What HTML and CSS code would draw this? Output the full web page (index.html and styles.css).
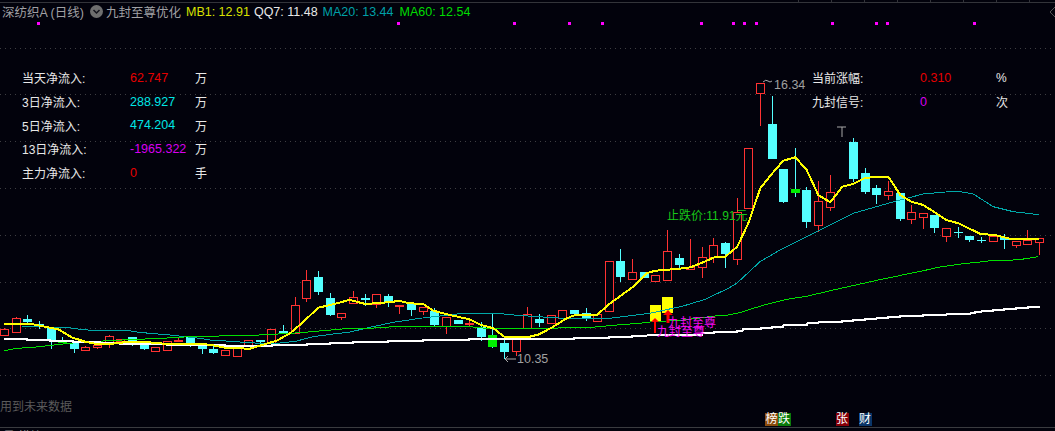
FILE: index.html
```html
<!DOCTYPE html>
<html lang="zh">
<head>
<meta charset="utf-8">
<title>深纺织A (日线)</title>
<link rel="stylesheet" href="styles.css">
</head>
<body>
<div class="screen">
  <svg class="chart" id="chart" width="1055" height="431" viewBox="0 0 1055 431" xmlns="http://www.w3.org/2000/svg">
    <g id="frame"></g>
    <g id="signals"></g>
    <g id="candles"></g>
    <g id="lines"></g>
    <path class="arrow-down" d="M668 310l5 5h-3.500v8h-3v-8h-3.500zM655 318l4 4h-3v11h-2v-11h-3z"/>
    <text class="tag-magenta" x="668" y="327">九封至尊</text>
    <text class="tag-magenta" x="657" y="336">九封至尊</text>
    <text class="tag-green" x="667" y="220">止跌价:11.91元</text>
    <text class="tag-grey" x="774" y="89">16.34</text>
    <text class="tag-grey" x="517" y="363">10.35</text>
    <path class="tag-stroke" d="M763 82q3-3 5-1t4 0M505 359h11M505 359l3-3M505 359l3 3"/>
    <path class="tag-stroke" d="M837 127h9M842 127v10"/>
    <path class="tag-stroke chev" d="M1055 7l-5 5 5 5"/>
    <text class="warn" x="0" y="411">用到未来数据</text>
    <text class="clip-text" x="3" y="441">量 模块</text>
  </svg>

  <header class="head">
    <span class="title">深纺织A (日线)</span>
    <span class="drop"><svg width="13" height="13" viewBox="0 0 13 13"><circle cx="6.500" cy="6.500" r="6.500" fill="#6e6e6e"/><path d="M3.500 5l3 3 3-3" fill="none" stroke="#14141c" stroke-width="1.500"/></svg></span>
    <span class="title">九封至尊优化</span>
    <span class="mb">MB1: 12.91</span>
    <span class="qq">QQ7: 11.48</span>
    <span class="ma20">MA20: 13.44</span>
    <span class="ma60">MA60: 12.54</span>
  </header>

  <main class="panels">
    <section class="stats left">
      <span>当天净流入:</span><span class="red">62.747</span><span>万</span>
      <span>3日净流入:</span><span class="cyan">288.927</span><span>万</span>
      <span>5日净流入:</span><span class="cyan">474.204</span><span>万</span>
      <span>13日净流入:</span><span class="magenta">-1965.322</span><span>万</span>
      <span>主力净流入:</span><span class="red">0</span><span>手</span>
    </section>
    <section class="stats right">
      <span>当前涨幅:</span><span class="red">0.310</span><span>%</span>
      <span>九封信号:</span><span class="magenta">0</span><span>次</span>
    </section>
  </main>

  <footer class="badges">
    <span class="badge brown">榜</span><span class="badge green">跌</span>
    <span class="badge maroon gap-a">张</span>
    <span class="badge navy gap-b">财</span>
  </footer>
</div>
<script src="chart.js"></script>
</body>
</html>
```
FILE: styles.css
```css
* { box-sizing: border-box; }
html, body { margin: 0; padding: 0; background: #02020c; }
.screen {
  position: relative;
  width: 1055px;
  height: 431px;
  overflow: hidden;
  background: #02020c;
  font-family: "Liberation Sans", "Noto Sans CJK SC", sans-serif;
  font-size: 12px;
  color: #e8e8e8;
}
.chart { position: absolute; left: 0; top: 0; }
.chart text { font-family: "Liberation Sans", "Noto Sans CJK SC", sans-serif; }

.head {
  position: relative;
  display: flex;
  align-items: center;
  height: 22px;
  padding: 1px 0 0 2px;
  font-size: 12.500px;
  white-space: nowrap;
}
.title { color: #a0a0a4; }
.drop { display: flex; margin: 0 3px 0 6px; }
.mb { color: #d8e000; margin-left: 5px; }
.qq { color: #e8e8e8; margin-left: 4px; }
.ma20 { color: #00a0a8; margin-left: 5px; }
.ma60 { color: #00dc00; margin-left: 6px; }

.panels {
  position: relative;
  display: flex;
  padding: 44px 0 0 22px;
}
.stats {
  display: grid;
  grid-auto-rows: 23.700px;
  align-items: center;
}
.left { grid-template-columns: 108px 65px 30px; }
.right { grid-template-columns: 108px 76px 30px; margin-left: 587px; }
.red, .cyan, .magenta { font-size: 12.500px; }
.red { color: #e60000; }
.cyan { color: #00e6e6; }
.magenta { color: #d800f0; }

.badges {
  position: absolute;
  left: 765px;
  top: 413px;
  display: flex;
}
.badge {
  width: 13px;
  height: 13px;
  font-size: 12px;
  line-height: 13px;
  text-align: center;
  color: #fff;
}
.brown { background: #8a4a0c; }
.green { background: #0a7a0a; margin-left: -0.500px; }
.maroon { background: #860008; }
.navy { background: #0a3568; }
.gap-a { margin-left: 45px; }
.gap-b { margin-left: 10px; }

.arrow-down { fill: #ff0000; }
.tag-magenta { fill: #f408f0; font-size: 12px; }
.tag-green { fill: #18c818; font-size: 12px; }
.tag-grey { fill: #a0a0a0; font-size: 12.500px; }
.tag-stroke { fill: none; stroke: #a8a8a8; stroke-width: 1; }
.chev { stroke: #555; }
.warn { fill: #5a5a5a; font-size: 12px; }
.clip-text { fill: #999; font-size: 12px; }
```
FILE: chart.js
```javascript
var NS = "http://www.w3.org/2000/svg";

function el(parent, name, attrs) {
  var node = document.createElementNS(NS, name);
  for (var key in attrs) node.setAttribute(key, attrs[key]);
  parent.appendChild(node);
  return node;
}

/* Frame: top rule with ticks, dotted price grid, bottom rule */
var frame = document.getElementById("frame");
el(frame, "rect", { x: 0, y: 2, width: 1055, height: 1, fill: "#33343a" });
[798, 831, 864, 897, 930, 963, 996, 1029].forEach(function (x) {
  el(frame, "rect", { x: x, y: 0, width: 1, height: 3, fill: "#33343a" });
});
[48, 94, 141, 188, 235, 282, 328, 375].forEach(function (y) {
  el(frame, "line", { x1: 0, x2: 1055, y1: y + 0.5, y2: y + 0.5, stroke: "#3e3e42", "stroke-dasharray": "1 4" });
});
el(frame, "rect", { x: 0, y: 427, width: 1055, height: 1, fill: "#3a3b40" });

/* Magenta signal dots along the top */
[38, 398, 514, 569, 602, 701, 733, 744, 756, 832, 876, 887, 974].forEach(function (x) {
  el(frame, "rect", { x: x - 1, y: 22, width: 3, height: 3, fill: "#ff00ff" });
});

/* Yellow signal bars */
var signals = document.getElementById("signals");
el(signals, "rect", { x: 650, y: 305, width: 11, height: 17, fill: "#ffff00" });
el(signals, "rect", { x: 662, y: 297, width: 11, height: 16, fill: "#ffff00" });

/* Candles: [index, type, bodyTop, bodyBottom, wickTop, wickBottom], measured per chart segment */
var segments = [
  { dy: 260, data: [
    [0,"r",208,224,204,224],[1,"r",175,215,170,218],[2,"c",177,186,165,190],[3,"c",193,196,183,208],
    [4,"c",205,240,200,266],[5,"g",243,248,232,248],[6,"c",250,266,250,278],[7,"r",262,269,258,269],
    [8,"r",254,260,254,266],[9,"r",229,245,225,263],[10,"r",238,243,238,250],[11,"c",232,243,232,258],
    [12,"c",255,266,255,269],[13,"r",262,272,262,272],[14,"r",244,269,244,269],[15,"R",240,245,234,245],
    [16,"c",232,249,232,260],[17,"c",258,267,258,282],[18,"c",267,278,258,282],[19,"r",271,284,271,284],
    [20,"r",264,287,264,287],[21,"r",241,255,241,255],[22,"c",240,246,240,250],[23,"r",208,250,208,250],
    [24,"c",213,222,195,222],[25,"r",136,220,111,220],[26,"r",61,113,30,125],[27,"c",51,96,33,105],
    [28,"c",114,165,99,168],[29,"r",160,170,160,180]
  ]},
  { dy: 240, data: [
    [30,"r",172,188,153,190],[31,"c",174,180,163,197],[32,"r",163,191,163,204],[33,"c",168,188,162,200],
    [34,"R",196,200,196,222],[35,"c",190,210,190,228],[36,"r",202,212,202,226],[37,"c",212,255,205,258],
    [38,"r",232,257,232,282],[39,"c",240,252,240,252],[40,"r",250,251,240,262],[41,"c",260,291,246,302],
    [42,"g",285,320,220,324],[43,"c",309,335,300,358],[44,"r",289,332,289,348],[45,"r",223,265,202,265],
    [46,"c",237,249,222,261],[47,"r",226,248,226,248],[48,"r",211,235,211,235],[49,"c",210,222,210,222],
    [50,"c",220,237,205,243],[51,"r",222,242,222,242],[52,"r",64,212,64,212],[53,"c",64,111,27,126],
    [54,"r",95,116,57,116]
  ]},
  { dy: 60, data: [
    [55,"c",636,655,636,655],[56,"r",646,662,646,662],[57,"r",574,660,510,660],[58,"c",595,615,582,625],
    [59,"r",620,628,537,628],[60,"r",592,622,562,654],[61,"r",556,590,534,608],[62,"c",549,582,546,624],
    [63,"r",455,598,415,614],[64,"r",265,443,265,443],[65,"r",70,98,70,197],[66,"c",192,297,108,297],
    [67,"c",327,426,327,429],[68,"g",388,398,265,412],[69,"c",390,486,382,503],[70,"r",424,496,364,516],
    [71,"r",397,440,346,452],[73,"c",246,357,235,365],[74,"c",339,396,325,402],[75,"c",385,404,376,432],
    [76,"r",394,406,362,420],[77,"c",400,477,400,483],[78,"r",457,476,435,491],[79,"r",460,470,460,506],
    [80,"c",465,504,465,519],[81,"r",505,527,505,545],[82,"x",516,516,500,535],[83,"c",528,540,528,545],
    [84,"x",540,540,532,548],[85,"r",528,542,528,545],[86,"c",530,540,522,567],[87,"r",544,554,544,564],
    [88,"r",541,551,510,551],[89,"r",535,545,535,585]
  ]}
];

var COLORS = { r: "#ff3232", R: "#ff3232", c: "#54ffff", g: "#00ee00", x: "#54ffff" };
var candles = document.getElementById("candles");
candles.setAttribute("shape-rendering", "crispEdges");

segments.forEach(function (segment) {
  segment.data.forEach(function (c) {
    var cx = Math.round(4 + 11.63 * c[0]) + 0.5;
    var type = c[1];
    var y = function (v) { return Math.round(v / 3 + segment.dy); };
    var wick = type === "g" ? COLORS.c : COLORS[type];
    el(candles, "line", { x1: cx, x2: cx, y1: y(c[4]), y2: y(c[5]), stroke: wick });
    if (type === "r") {
      el(candles, "rect", {
        x: cx - 4, y: y(c[2]) + 0.5, width: 8, height: Math.max(y(c[3]) - y(c[2]), 1),
        fill: "#02020c", stroke: COLORS.r
      });
    } else if (type === "x") {
      el(candles, "line", { x1: cx - 4.5, x2: cx + 4.5, y1: y(c[2]) + 0.5, y2: y(c[2]) + 0.5, stroke: wick });
    } else {
      el(candles, "rect", {
        x: cx - 4.5, y: y(c[2]), width: 9, height: Math.max(y(c[3]) - y(c[2]), 1), fill: COLORS[type]
      });
    }
  });
});

/* Moving-average lines, points measured per chart segment: [dx, dy, [x, y, ...]] */
function join(parts) {
  var out = [];
  parts.forEach(function (part) {
    for (var i = 0; i < part[2].length; i += 2) {
      out.push((part[2][i] / 3 + part[0]).toFixed(1) + "," + (part[2][i + 1] / 3 + part[1]).toFixed(1));
    }
  });
  return out.join(" ");
}

var series = [
  { color: "#00a8a8", width: 1, parts: [
    [0,260,[65,199,207,203,240,208,275,211,380,211,415,217,450,220,485,223,520,226,555,230,600,235,635,241,695,244,730,247,815,252,860,247,890,243,940,230,1000,222,1050,216]],
    [350,240,[60,262,130,247,210,235,340,220,440,220,500,226,640,235,780,235]],
    [600,200,[150,340,250,318,316,298,385,265,410,250,480,185,540,150,600,120]],
    [640,60,[530,515,640,460,780,420,850,402,950,393,1000,402,1060,440,1120,455,1198,464]]
  ]},
  { color: "#00e000", width: 1, parts: [
    [0,260,[12,272,40,267,65,264,100,262,135,258,170,254,240,247,345,241,415,238,485,235,590,229,730,227,800,224,900,218,1050,205]],
    [350,240,[60,265,130,260,360,260,400,264,580,265,725,262,800,255,870,250]],
    [600,200,[150,366,250,360,316,352]],
    [720,290,[0,76,20,76,60,68,100,55,140,43,200,28,260,19,340,0]],
    [640,60,[715,660]],
    [930,210,[0,178,25,172,65,166,110,160,160,155,180,152,240,151,275,148,305,143,325,140]]
  ]},
  { color: "#ffffff", width: 2, parts: [
    [0,260,[12,237,80,237,80,240,150,240,150,243,220,243,220,246,300,246,300,250,360,250,360,252,500,252,500,255,675,255,675,258,815,258,815,255,920,255,920,253,990,253,990,248,1050,248]],
    [350,240,[0,309,10,309,10,305,115,305,115,303,220,303,220,300,358,300,358,296,673,296,673,294,778,294,778,291,847,291,847,288,870,288]],
    [600,200,[165,405,307,405,307,399,343,399,343,396,360,396]],
    [720,290,[0,126,52,126,52,122,68,122,68,118,122,118,122,114,157,114,157,110,190,110,190,106,226,106,226,104,262,104,262,100,295,100,295,97,331,97,331,95,366,95,366,92,400,92,400,89,436,89,436,86,470,86,470,83,505,83,505,80,541,80,541,77,610,77,610,74,680,74,680,71,752,71,752,68,766,68,766,65,785,65,785,62,820,62,820,59,853,59,853,56,888,56,888,53,925,53,925,50,960,50]]
  ]},
  { color: "#ffff00", width: 2, parts: [
    [0,260,[12,193,100,193,150,203,175,208,215,232,255,245,290,252,330,252,360,248,400,245,465,248,500,252,610,252,640,256,680,264,750,266,790,254,830,242,870,220,905,190,955,143,1000,133,1050,119]],
    [350,240,[0,180,46,192,100,188,148,183,180,190,220,192,250,212,300,225,358,238,394,255,430,265,463,290,532,292,568,283,610,260,650,235,673,226,742,224,778,192,847,142]],
    [640,60,[20,640,46,632,118,626,151,622,187,608,223,592,256,590,292,560,325,490,361,385,397,340,430,302,466,292,500,330,535,405,571,427,607,380,640,372,676,353,745,350,781,405,814,425,850,435,886,458,919,480,955,490,1024,523,1060,524,1110,536,1198,537]]
  ]}
];

var lines = document.getElementById("lines");
series.forEach(function (s) {
  el(lines, "polyline", {
    points: join(s.parts), fill: "none", stroke: s.color, "stroke-width": s.width,
    "shape-rendering": "crispEdges", "stroke-linejoin": "round"
  });
});
```
